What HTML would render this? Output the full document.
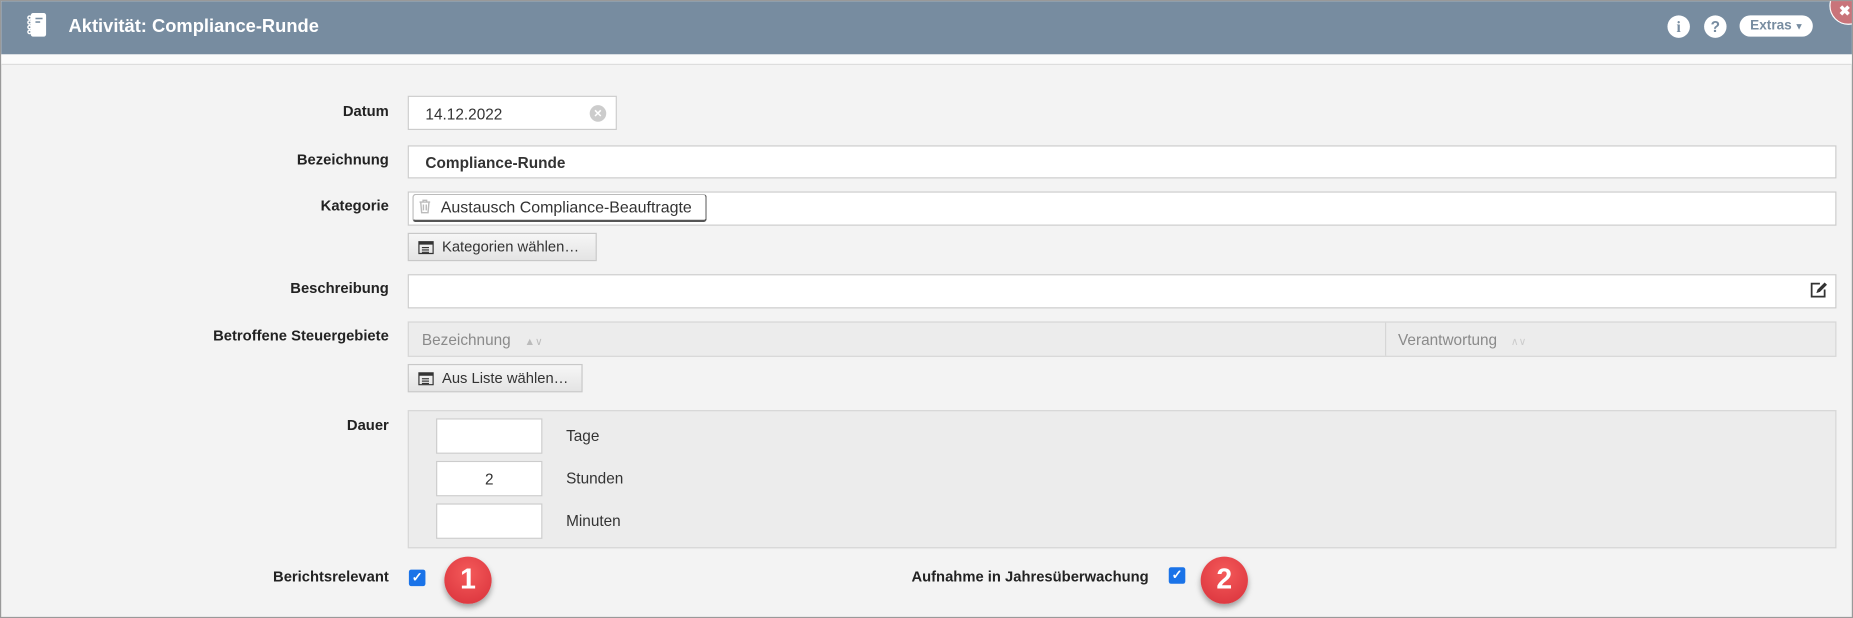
<!DOCTYPE html>
<html><head><meta charset="utf-8"><style>
*{box-sizing:border-box;margin:0;padding:0}
html,body{width:1853px;height:618px;overflow:hidden;background:#fff}
#s{position:absolute;left:0;top:0;width:1568px;height:523px;transform:scale(1.18176);transform-origin:0 0;font-family:"Liberation Sans",sans-serif;font-size:13px;color:#333;background:#f3f3f3;border:1px solid #999;overflow:hidden}
.a{position:absolute}
.hdr{left:0;top:0;width:1568px;height:45px;background:#778ca0}
.title{left:57px;top:13px;color:#fff;font-weight:bold;font-size:15.5px}
.strip{left:0;top:45px;width:1568px;height:9px;background:#fbfbfb;border-bottom:1px solid #ddd}
.lbl{right:1238px;text-align:right;white-space:nowrap;font-size:12.5px;color:#222;font-weight:bold}
.inp{background:#fff;border:1px solid #ccc}
.btn{background:linear-gradient(#f6f6f6,#e4e4e4);border:1px solid #c8c8c8;font-size:12.5px;padding:4px 0 0 28px;color:#333}
.bi{position:absolute;left:8px;top:6px;width:13px;height:11px;border:1.5px solid #333;border-top-width:3px}
.bi:after{content:"";position:absolute;left:2px;top:2px;width:6px;height:1px;background:#333;box-shadow:0 2px #333,0 4px #333}
.cb{width:14px;height:14px;background:#1a73e8;border-radius:2px;color:#fff;font-size:11px;font-weight:bold;text-align:center;line-height:14px}
.badge{width:40px;height:40px;border-radius:50%;background:radial-gradient(circle at 50% 35%,#f45a5a,#d8303a);color:#fff;font-weight:bold;font-size:24px;text-align:center;line-height:40px;box-shadow:0 3px 5px rgba(0,0,0,.35)}
</style></head><body><div id="s">
<div class="a hdr"></div>
<svg class="a" style="left:20px;top:9px" width="20" height="22" viewBox="0 0 20 22"><rect x="5" y="1" width="13" height="20" rx="2" fill="#fff"/><g fill="none" stroke="#fff" stroke-width="1.2"><circle cx="4" cy="5" r="1.4"/><circle cx="4" cy="9" r="1.4"/><circle cx="4" cy="13" r="1.4"/><circle cx="4" cy="17" r="1.4"/></g><rect x="9" y="5" width="6" height="1.3" fill="#778ca0"/><rect x="9" y="8" width="4" height="1.3" fill="#778ca0"/></svg>
<div class="a title">Aktivität: Compliance-Runde</div>
<div class="a" style="left:1410px;top:12px;width:19px;height:19px;border-radius:50%;background:#fff;color:#778ca0;font-weight:bold;font-size:13px;text-align:center;line-height:19px;font-family:'Liberation Serif',serif">i</div>
<div class="a" style="left:1441px;top:12px;width:19px;height:19px;border-radius:50%;background:#fff;color:#778ca0;font-weight:bold;font-size:13px;text-align:center;line-height:19px">?</div>
<div class="a" style="left:1471px;top:12px;width:62px;height:18px;border-radius:9px;background:#fff;color:#778ca0;font-weight:bold;font-size:11.5px;line-height:18px;padding-left:9px">Extras<span style="font-size:8px"> ▼</span></div>
<div class="a" style="left:1547px;top:-12px;width:32px;height:32px;border-radius:50%;background:#c9747a;border:1.5px solid #fff;color:#fff;font-weight:bold;font-size:12px;padding:12px 0 0 7px">✖</div>
<div class="a strip"></div>

<div class="a lbl" style="top:86px">Datum</div>
<div class="a inp" style="left:344px;top:80px;width:177px;height:29px;padding:7px 14px">14.12.2022</div>
<div class="a" style="left:498px;top:88px;width:14px;height:14px;border-radius:50%;background:#ccc;color:#fff;font-size:9px;font-weight:bold;text-align:center;line-height:14px">✕</div>

<div class="a lbl" style="top:127px">Bezeichnung</div>
<div class="a inp" style="left:344px;top:122px;width:1209px;height:28px;padding:6px 14px;font-weight:bold">Compliance-Runde</div>

<div class="a lbl" style="top:166px">Kategorie</div>
<div class="a inp" style="left:344px;top:161px;width:1209px;height:29px"></div>
<div class="a" style="left:348px;top:163px;width:249px;height:24px;background:#fff;border:1px solid #bbb;border-right-color:#555;border-bottom:2px solid #555;border-radius:3px;padding:3px 0 0 23px;font-size:13.5px">Austausch Compliance-Beauftragte</div>
<svg class="a" style="left:353px;top:167px" width="11" height="13" viewBox="0 0 11 13"><g fill="none" stroke="#bbb" stroke-width="1.2"><path d="M1 3h9M4 3V1.5h3V3M2 3l.8 9h5.4L9 3M4.3 5v5M6.7 5v5"/></g></svg>
<div class="a btn" style="left:344px;top:196px;width:160px;height:24px"><i class="bi"></i>Kategorien wählen…</div>

<div class="a lbl" style="top:236px">Beschreibung</div>
<div class="a inp" style="left:344px;top:231px;width:1209px;height:29px"></div>
<svg class="a" style="left:1530px;top:237px" width="16" height="15" viewBox="0 0 16 15"><path d="M9 2H2v11h11V7" fill="none" stroke="#333" stroke-width="1.5"/><path d="M6 10l1-3 6-6 2 2-6 6z" fill="#333"/></svg>

<div class="a lbl" style="top:276px">Betroffene Steuergebiete</div>
<div class="a" style="left:344px;top:271px;width:1209px;height:30px;background:#ececec;border:1px solid #d6d6d6;color:#888"></div>
<div class="a" style="left:1171px;top:272px;width:1px;height:28px;background:#d6d6d6"></div>
<div class="a" style="left:356px;top:279px;color:#8a8a8a;font-size:13px">Bezeichnung <span style="color:#bbb;font-size:9px;margin-left:8px">▲∨</span></div>
<div class="a" style="left:1182px;top:279px;color:#8a8a8a;font-size:13px">Verantwortung <span style="color:#ccc;font-size:9px;margin-left:8px">∧∨</span></div>
<div class="a btn" style="left:344px;top:307px;width:148px;height:24px"><i class="bi"></i>Aus Liste wählen…</div>

<div class="a lbl" style="top:352px">Dauer</div>
<div class="a" style="left:344px;top:346px;width:1209px;height:117px;background:#ececec;border:1px solid #d6d6d6"></div>
<div class="a inp" style="left:368px;top:353px;width:90px;height:30px"></div>
<div class="a inp" style="left:368px;top:389px;width:90px;height:30px;text-align:center;padding-top:7px">2</div>
<div class="a inp" style="left:368px;top:425px;width:90px;height:30px"></div>
<div class="a" style="left:478px;top:360px">Tage</div>
<div class="a" style="left:478px;top:396px">Stunden</div>
<div class="a" style="left:478px;top:432px">Minuten</div>

<div class="a lbl" style="top:480px">Berichtsrelevant</div>
<div class="a cb" style="left:345px;top:481px">✓</div>
<div class="a badge" style="left:375px;top:470px">1</div>
<div class="a lbl" style="top:480px;right:595px">Aufnahme in Jahresüberwachung</div>
<div class="a cb" style="left:988px;top:479px">✓</div>
<div class="a badge" style="left:1015px;top:470px">2</div>
</div></body></html>
